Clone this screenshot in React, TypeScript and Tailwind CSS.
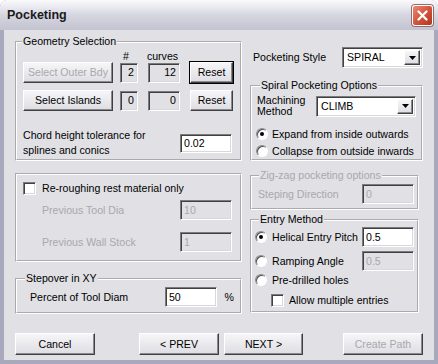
import React from 'react'

const group = 'border-2 [border-style:groove] border-white min-w-0'
const sunken =
  'border border-t-[#7b7b7b] border-l-[#7b7b7b] border-r-white border-b-white shadow-[inset_1px_1px_0_#404040,inset_-1px_-1px_0_#d8d7dc]'
const raised =
  'border border-t-white border-l-white border-r-[#404040] border-b-[#404040] shadow-[inset_-1px_-1px_0_#8a8a8e] bg-gradient-to-b from-[#f6f6f8] to-[#dedde3]'

function Btn({ label, w, disabled, focused }: { label: string; w: string; disabled?: boolean; focused?: boolean }) {
  return (
    <div
      className={`${w} h-full flex items-center justify-center ${raised} ${
        focused ? 'outline outline-1 outline-black' : ''
      } ${disabled ? 'text-[#a9a8ad]' : 'text-black'}`}
    >
      {label}
    </div>
  )
}

function Field({
  value,
  w,
  h = 'h-[20px]',
  right,
  disabled,
  grey,
}: {
  value: string
  w: string
  h?: string
  right?: boolean
  disabled?: boolean
  grey?: boolean
}) {
  return (
    <div
      className={`${w} ${h} ${sunken} flex items-center px-[3px] ${right ? 'justify-end' : ''} ${
        grey || disabled ? 'bg-[#e1e0e5]' : 'bg-white'
      } ${disabled ? 'text-[#a9a8ad]' : 'text-black'}`}
    >
      {value}
    </div>
  )
}

function Select({ value, w }: { value: string; w: string }) {
  return (
    <div className={`${w} h-[21px] ${sunken} bg-white flex items-center pl-[4px] pr-[2px]`}>
      <span className="flex-1">{value}</span>
      <div className={`w-[16px] h-[15px] ${raised} flex items-center justify-center`}>
        <svg width="7" height="4" viewBox="0 0 7 4">
          <polygon points="0,0 7,0 3.5,4" fill="#000" />
        </svg>
      </div>
    </div>
  )
}

function Radio({ checked }: { checked?: boolean }) {
  return (
    <div className="w-[12px] h-[12px] rounded-full bg-white border border-[#8c8c90] border-b-white border-r-white shadow-[inset_1px_1px_0_#505050] flex items-center justify-center flex-shrink-0">
      {checked && <div className="w-[4px] h-[4px] rounded-full bg-black" />}
    </div>
  )
}

function Check() {
  return <div className={`w-[13px] h-[13px] bg-white ${sunken} flex-shrink-0`} />
}

export default function App() {
  return (
    <div className="w-[438px] h-[364px] bg-[#a9a9bd] rounded-t-[7px] overflow-hidden flex flex-col font-['Liberation_Sans',Arial,sans-serif] text-[10.6px] leading-[13px] text-black">
      {/* Title bar */}
      <div className="h-[30px] flex items-center pl-[7px] pr-[5px] bg-gradient-to-b from-[#fbfbfd] via-[#d6d6e1] to-[#c3c3d1]">
        <span className="text-[12.5px] font-bold text-[#1a1a1a] mt-[1px]">Pocketing</span>
        <div className="ml-auto w-[21px] h-[21px] rounded-[3px] border border-white bg-gradient-to-br from-[#e88a74] via-[#d2553b] to-[#b0351f] flex items-center justify-center shadow-[0_0_0_1px_#9a6a68]">
          <svg width="11" height="11" viewBox="0 0 11 11">
            <path d="M1.5 1.5 L9.5 9.5 M9.5 1.5 L1.5 9.5" stroke="#fff" strokeWidth="2.2" strokeLinecap="round" />
          </svg>
        </div>
      </div>

      {/* Client */}
      <div className="flex-1 mx-[4px] mb-[4px] bg-[#e1e0e5] px-[11px] flex flex-col">
        <div className="flex gap-[8px]">
          {/* Left column */}
          <div className="w-[227px] flex flex-col">
            <fieldset className={`${group} mt-[5px] h-[126px] pl-[6px] pr-[6px]`}>
              <legend className="ml-[-1px] px-[1px]">Geometry Selection</legend>
              <div className="h-[12px] mt-[2px] flex">
                <span className="ml-[100px]">#</span>
                <span className="ml-[18px]">curves</span>
              </div>
              <div className="h-[21px] flex items-center">
                <Btn label="Select Outer Bdy" w="w-[90px]" disabled />
                <div className="ml-[7px]"><Field value="2" w="w-[18px]" right grey /></div>
                <div className="ml-[10px]"><Field value="12" w="w-[32px]" right grey /></div>
                <div className="ml-[10px] h-full"><Btn label="Reset" w="w-[43px]" focused /></div>
              </div>
              <div className="h-[21px] mt-[7px] flex items-center">
                <Btn label="Select Islands" w="w-[90px]" />
                <div className="ml-[7px]"><Field value="0" w="w-[18px]" right grey /></div>
                <div className="ml-[10px]"><Field value="0" w="w-[32px]" right grey /></div>
                <div className="ml-[10px] h-full"><Btn label="Reset" w="w-[43px]" /></div>
              </div>
              <div className="mt-[17px] flex items-center">
                <div className="leading-[15px] w-[157px]">
                  Chord height tolerance for
                  <br />
                  splines and conics
                </div>
                <Field value="0.02" w="w-[52px]" h="h-[19px]" />
              </div>
            </fieldset>

            <div className={`${group} mt-[12px] h-[89px] pl-[6px] pr-[6px] pt-[7px]`}>
              <div className="h-[13px] flex items-center">
                <Check />
                <span className="ml-[6px]">Re-roughing rest material only</span>
              </div>
              <div className="mt-[5px] h-[20px] flex items-center text-[#a9a8ad]">
                <span className="ml-[19px] w-[138px]">Previous Tool Dia</span>
                <Field value="10" w="w-[52px]" disabled />
              </div>
              <div className="mt-[12px] h-[20px] flex items-center text-[#a9a8ad]">
                <span className="ml-[19px] w-[138px]">Previous Wall Stock</span>
                <Field value="1" w="w-[52px]" disabled />
              </div>
            </div>

            <fieldset className={`${group} mt-[10px] h-[42px] pl-[13px] pr-[6px]`}>
              <legend className="ml-[-5px] px-[1px]">Stepover in XY</legend>
              <div className="mt-[2px] h-[20px] flex items-center">
                <span className="w-[136px]">Percent of Tool Diam</span>
                <Field value="50" w="w-[52px]" />
                <span className="ml-[8px]">%</span>
              </div>
            </fieldset>
          </div>

          {/* Right column */}
          <div className="w-[174px] flex flex-col">
            <div className="mt-[17px] h-[21px] flex items-center justify-between">
              <span className="ml-[3px]">Pocketing Style</span>
              <Select value="SPIRAL" w="w-[81px]" />
            </div>

            <fieldset className={`${group} mt-[11px] h-[82px] pl-[4px] pr-[5px]`}>
              <legend className="ml-[4px] px-[1px]">Spiral Pocketing Options</legend>
              <div className="mt-[3px] flex items-center justify-between">
                <span className="leading-[11px] ml-[1px]">
                  Machining
                  <br />
                  Method
                </span>
                <Select value="CLIMB" w="w-[100px]" />
              </div>
              <div className="mt-[9px] h-[16px] flex items-center">
                <Radio checked />
                <span className="ml-[4px]">Expand from inside outwards</span>
              </div>
              <div className="mt-[1px] h-[16px] flex items-center">
                <Radio />
                <span className="ml-[4px]">Collapse from outside inwards</span>
              </div>
            </fieldset>

            <fieldset className={`${group} w-[169px] mt-[8px] h-[41px] pl-[4px] pr-[3px] text-[#a9a8ad]`}>
              <legend className="ml-[3px] px-[1px]">Zig-zag pocketing options</legend>
              <div className="mt-[2px] h-[20px] flex items-center justify-between">
                <span className="ml-[2px]">Steping Direction</span>
                <Field value="0" w="w-[52px]" disabled />
              </div>
            </fieldset>

            <fieldset className={`${group} w-[169px] mt-[3px] h-[100px] pl-[3px] pr-[3px]`}>
              <legend className="ml-[4px] px-[1px]">Entry Method</legend>
              <div className="mt-[1px] h-[20px] flex items-center">
                <Radio checked />
                <span className="ml-[5px] flex-1">Helical Entry Pitch</span>
                <Field value="0.5" w="w-[52px]" />
              </div>
              <div className="mt-[4px] h-[20px] flex items-center">
                <Radio />
                <span className="ml-[5px] flex-1">Ramping Angle</span>
                <Field value="0.5" w="w-[52px]" disabled />
              </div>
              <div className="mt-[1px] h-[16px] flex items-center">
                <Radio />
                <span className="ml-[5px]">Pre-drilled holes</span>
              </div>
              <div className="mt-[6px] h-[13px] flex items-center">
                <div className="ml-[16px]"><Check /></div>
                <span className="ml-[5px]">Allow multiple entries</span>
              </div>
            </fieldset>
          </div>
        </div>

        {/* Bottom buttons */}
        <div className="mt-[19px] h-[22px] flex">
          <Btn label="Cancel" w="w-[80px]" />
          <div className="ml-[44px] h-full"><Btn label="< PREV" w="w-[80px]" /></div>
          <div className="ml-[5px] h-full"><Btn label="NEXT >" w="w-[79px]" /></div>
          <div className="ml-[40px] h-full"><Btn label="Create Path" w="w-[80px]" disabled /></div>
        </div>
      </div>
    </div>
  )
}
